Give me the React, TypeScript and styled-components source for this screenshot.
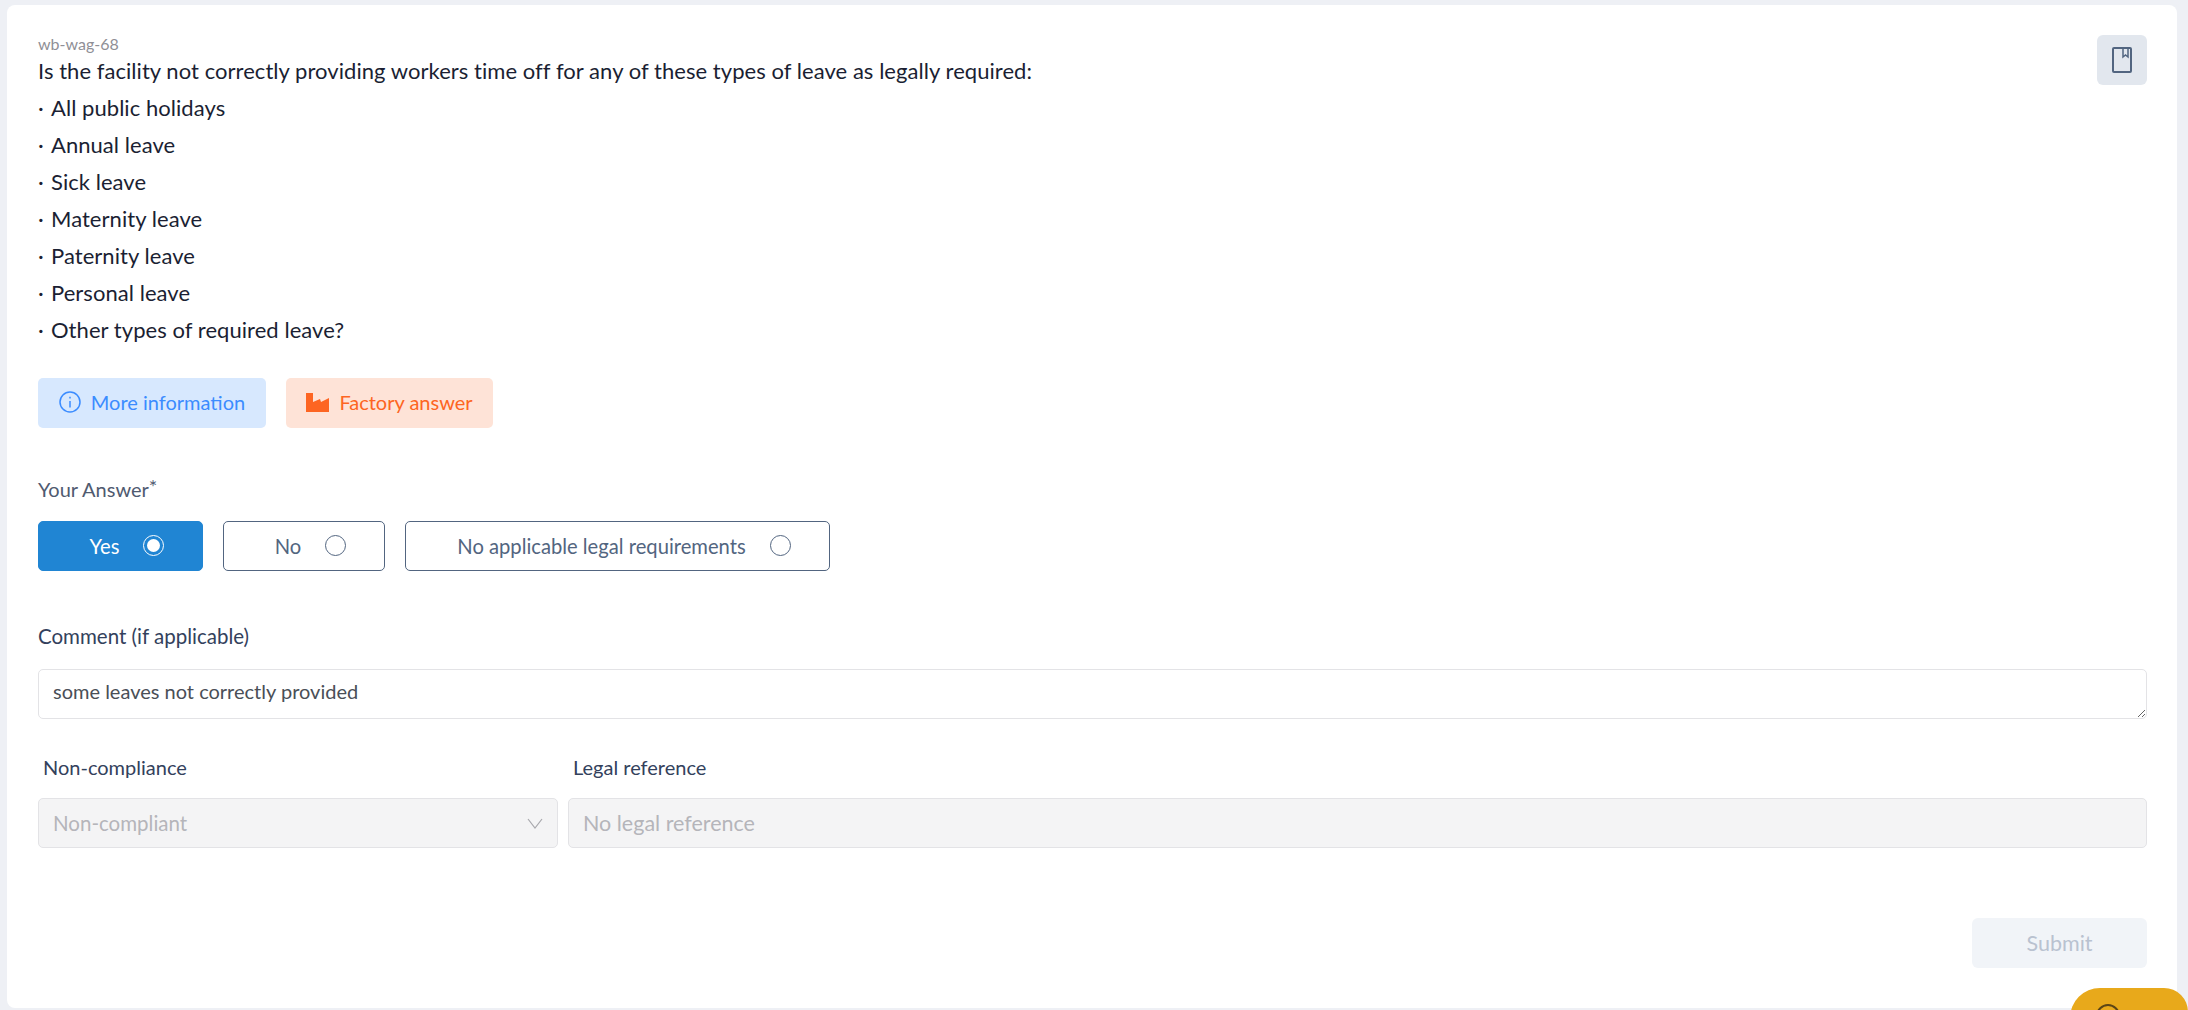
import React from "react";
import styled, { createGlobalStyle } from "styled-components";

const GlobalStyle = createGlobalStyle`
  html, body {
    margin: 0;
    padding: 0;
    height: 100%;
    overflow: hidden;
    background: #eef0f5;
    font-family: Lato, "Noto Sans", sans-serif;
  }
  * { box-sizing: border-box; }
`;

const Page = styled.div`
  height: 1010px;
  padding: 5px 11px 2px 7px;
  overflow: hidden;
`;

const Card = styled.main`
  position: relative;
  height: 100%;
  padding: 27px 30px 40px 31px;
  background: #fff;
  border-radius: 8px;
`;

const Head = styled.header`
  display: flex;
  justify-content: space-between;
  align-items: flex-start;
`;

const Code = styled.div`
  height: 20px;
  font-size: 16px;
  line-height: 24px;
  color: #8f8f96;
`;

const Question = styled.div`
  font-size: 22px;
  line-height: 37px;
  letter-spacing: 0.05px;
  color: #1b1f33;
`;

const Dot = styled.span`
  display: inline-block;
  width: 13px;
`;

const BookButton = styled.button`
  display: flex;
  align-items: center;
  justify-content: center;
  width: 50px;
  height: 50px;
  margin-top: 3px;
  border: 0;
  border-radius: 6px;
  background: #e2e7ee;
  color: #526580;
`;

const InfoRow = styled.div`
  display: flex;
  gap: 20px;
  margin-top: 30px;
`;

const InfoButton = styled.button<{ $tone: "blue" | "orange"; $width: number }>`
  display: flex;
  align-items: center;
  justify-content: center;
  gap: 10px;
  width: ${(p) => p.$width}px;
  height: 50px;
  padding: 0 0 2px;
  border: 0;
  border-radius: 5px;
  font: inherit;
  font-size: 20px;
  background: ${(p) => (p.$tone === "blue" ? "#d7e8fe" : "#fee3d7")};
  color: ${(p) => (p.$tone === "blue" ? "#3b8cff" : "#fd6522")};
`;

const FieldLabel = styled.div`
  font-size: 20px;
  line-height: 24px;
  color: #4f5a70;
  sup {
    font-size: 20px;
    line-height: 0;
    vertical-align: 3px;
  }
`;

const AnswerLabel = styled(FieldLabel)`
  margin-top: 49px;
`;

const Answers = styled.div`
  display: flex;
  gap: 20px;
  margin-top: 20px;
`;

const Answer = styled.button<{ $active?: boolean; $width: number }>`
  display: flex;
  align-items: center;
  justify-content: center;
  gap: 24px;
  width: ${(p) => p.$width}px;
  height: 50px;
  padding: 0 0 1px 13px;
  border: 1px solid ${(p) => (p.$active ? "#2085d3" : "#526580")};
  border-radius: 5px;
  font: inherit;
  font-size: 20.200px;
  background: ${(p) => (p.$active ? "#2085d3" : "#fff")};
  color: ${(p) => (p.$active ? "#fff" : "#526580")};
`;

const Radio = styled.span<{ $active?: boolean }>`
  display: flex;
  align-items: center;
  justify-content: center;
  width: 21px;
  height: 21px;
  border: 1px solid ${(p) => (p.$active ? "#fff" : "#526580")};
  border-radius: 50%;
  &::after {
    content: "";
    display: ${(p) => (p.$active ? "block" : "none")};
    width: 13px;
    height: 13px;
    border-radius: 50%;
    background: #fff;
  }
`;

const CommentLabel = styled(FieldLabel)`
  margin-top: 53px;
  font-size: 20.500px;
  color: #33415c;
`;

const Comment = styled.textarea`
  display: block;
  width: 100%;
  height: 50px;
  margin-top: 21px;
  padding: 9px 14px;
  border: 1px solid #e3e3e6;
  border-radius: 5px;
  font: inherit;
  font-size: 20px;
  line-height: 24px;
  color: #4a4f57;
  outline: none;
`;

const ComplianceRow = styled.div`
  display: grid;
  grid-template-columns: 520px 1fr;
  column-gap: 10px;
  margin-top: 36px;
`;

const ComplianceField = styled.div`
  display: flex;
  flex-direction: column;
  gap: 19px;
`;

const ComplianceLabel = styled(FieldLabel)`
  padding-left: 5px;
  color: #33415c;
`;

const DisabledSelect = styled.div`
  display: flex;
  align-items: center;
  justify-content: space-between;
  height: 50px;
  padding: 0 14px;
  border: 1px solid #e3e3e6;
  border-radius: 5px;
  font-size: 20.500px;
  background: #f4f4f5;
  color: #b5b5ba;
`;

const DisabledInput = styled.input`
  height: 50px;
  padding: 0 14px;
  border: 1px solid #e3e3e6;
  border-radius: 5px;
  font: inherit;
  font-size: 21.500px;
  background: #f4f4f5;
  &::placeholder {
    color: #b5b5ba;
    opacity: 1;
  }
`;

const Footer = styled.footer`
  display: flex;
  justify-content: flex-end;
  margin-top: 70px;
`;

const Submit = styled.button`
  width: 175px;
  height: 50px;
  border: 0;
  border-radius: 6px;
  font: inherit;
  font-size: 21.500px;
  background: #f1f4f8;
  color: #b9c2d0;
`;

const ChatBubble = styled.div`
  position: fixed;
  left: 2070px;
  top: 988px;
  width: 118px;
  height: 60px;
  border-radius: 30px 24px 0 0;
  background: #e8a91b;
  svg {
    position: absolute;
    left: 26px;
    top: 16px;
  }
`;

const leaveTypes = [
  "All public holidays",
  "Annual leave",
  "Sick leave",
  "Maternity leave",
  "Paternity leave",
  "Personal leave",
  "Other types of required leave?",
];

export default function App() {
  return (
    <>
      <GlobalStyle />
      <Page>
        <Card>
          <Head>
            <div>
              <Code>wb-wag-68</Code>
              <Question>
                Is the facility not correctly providing workers time off for any of these types of leave as legally required:
                {leaveTypes.map((leave) => (
                  <div key={leave}>
                    <Dot>·</Dot>
                    {leave}
                  </div>
                ))}
              </Question>
            </div>
            <BookButton aria-label="Bookmark">
              <svg width="20" height="26" viewBox="0 0 20 26" fill="none" stroke="currentColor" strokeWidth="2">
                <rect x="1" y="1" width="18" height="24" rx="1" />
                <path d="M11 1v9l2.500-2 2.500 2V1" strokeWidth="1.500" />
              </svg>
            </BookButton>
          </Head>

          <InfoRow>
            <InfoButton $tone="blue" $width={228}>
              <svg width="22" height="22" viewBox="0 0 22 22" fill="none" stroke="currentColor" strokeWidth="1.500">
                <circle cx="11" cy="11" r="10" />
                <path d="M11 10v6.500" />
                <path d="M11 5.800v1.600" />
              </svg>
              More information
            </InfoButton>
            <InfoButton $tone="orange" $width={207}>
              <svg width="23" height="19" viewBox="0 0 23 19" fill="currentColor">
                <path d="M0 0H7V9L14 6L15 9L23 5V19H0Z" />
              </svg>
              Factory answer
            </InfoButton>
          </InfoRow>

          <AnswerLabel>
            Your Answer<sup>*</sup>
          </AnswerLabel>
          <Answers>
            <Answer $active $width={165}>
              Yes <Radio $active />
            </Answer>
            <Answer $width={162}>
              No <Radio />
            </Answer>
            <Answer $width={425}>
              No applicable legal requirements <Radio />
            </Answer>
          </Answers>

          <CommentLabel>Comment (if applicable)</CommentLabel>
          <Comment readOnly value="some leaves not correctly provided" />

          <ComplianceRow>
            <ComplianceField>
              <ComplianceLabel>Non-compliance</ComplianceLabel>
              <DisabledSelect>
                Non-compliant
                <svg width="16" height="11" viewBox="0 0 16 11" fill="none" stroke="#a8a8ad" strokeWidth="1.200">
                  <path d="M1 1l7 9 7-9" />
                </svg>
              </DisabledSelect>
            </ComplianceField>
            <ComplianceField>
              <ComplianceLabel>Legal reference</ComplianceLabel>
              <DisabledInput disabled placeholder="No legal reference" />
            </ComplianceField>
          </ComplianceRow>

          <Footer>
            <Submit disabled>Submit</Submit>
          </Footer>
        </Card>
        <ChatBubble>
          <svg width="24" height="24" viewBox="0 0 24 24" fill="none" stroke="#5b4516" strokeWidth="2">
            <circle cx="12" cy="12" r="11" />
          </svg>
        </ChatBubble>
      </Page>
    </>
  );
}
